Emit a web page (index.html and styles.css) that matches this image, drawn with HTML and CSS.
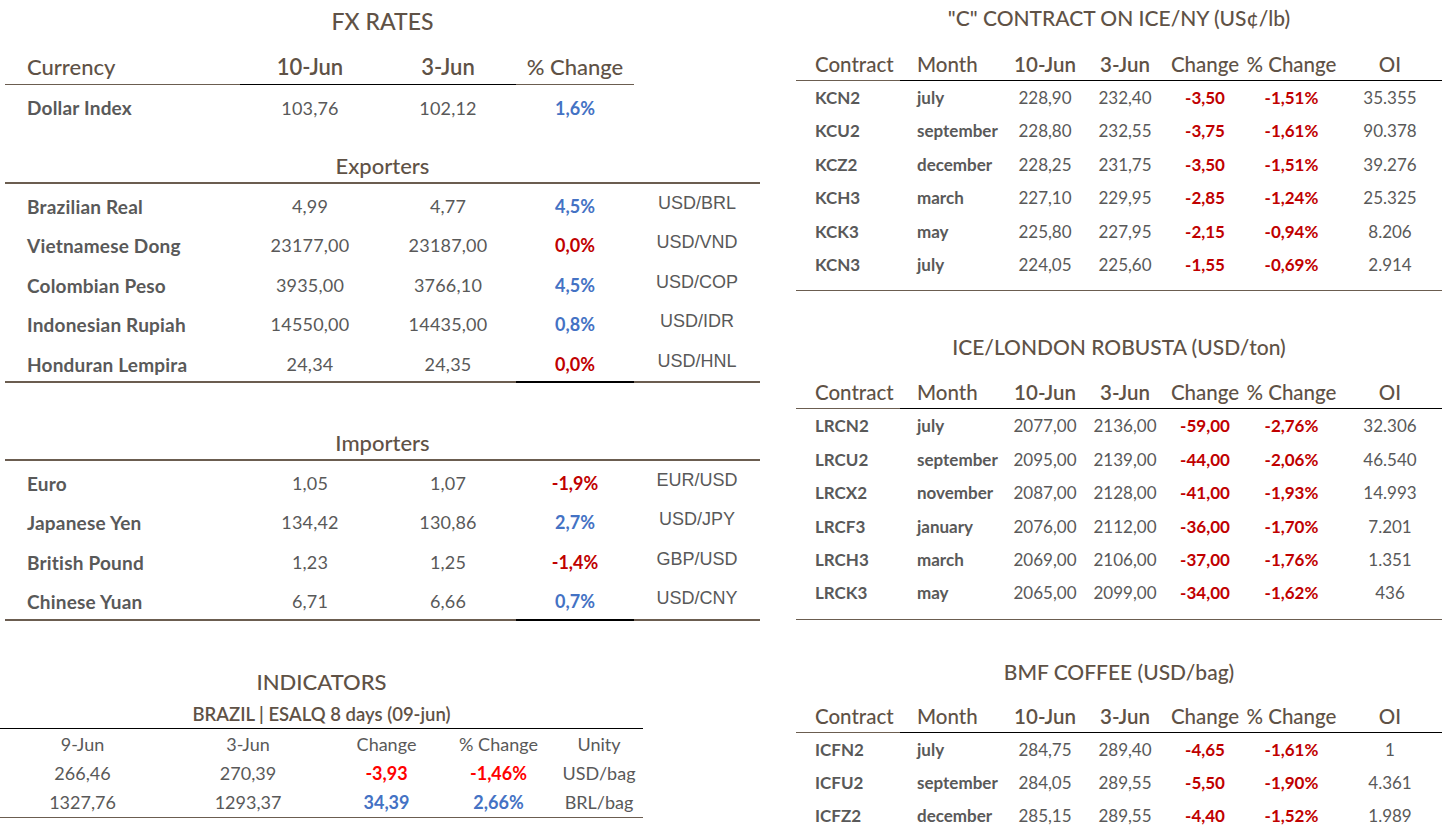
FILE: index.html
```html
<!DOCTYPE html>
<html lang="en">
<head>
<meta charset="utf-8">
<title>Market Report</title>
<link rel="stylesheet" href="styles.css">
</head>
<body>
<div class="page">
  <section class="left">
    <div class="fx">
      <h2 class="title fx-title">FX RATES</h2>
      <div class="fx-grid fx-head">
        <div class="cell name b-brown">Currency</div>
        <div class="cell num b-black date">10-Jun</div>
        <div class="cell num b-black date">3-Jun</div>
        <div class="cell num b-brown">% Change</div>
        <div class="cell"></div>
      </div>
      <div class="fx-grid fx-dollar">
        <div class="cell name">Dollar Index</div>
        <div class="cell num">103,76</div>
        <div class="cell num">102,12</div>
        <div class="cell num pct up">1,6%</div>
        <div class="cell"></div>
      </div>

      <h3 class="title sub-title exp-title">Exporters</h3>
      <div class="fx-grid fx-row">
        <div class="cell name">Brazilian Real</div>
        <div class="cell num">4,99</div>
        <div class="cell num">4,77</div>
        <div class="cell num pct up">4,5%</div>
        <div class="cell unit">USD/BRL</div>
      </div>
      <div class="fx-grid fx-row">
        <div class="cell name">Vietnamese Dong</div>
        <div class="cell num">23177,00</div>
        <div class="cell num">23187,00</div>
        <div class="cell num pct down">0,0%</div>
        <div class="cell unit">USD/VND</div>
      </div>
      <div class="fx-grid fx-row">
        <div class="cell name">Colombian Peso</div>
        <div class="cell num">3935,00</div>
        <div class="cell num">3766,10</div>
        <div class="cell num pct up">4,5%</div>
        <div class="cell unit">USD/COP</div>
      </div>
      <div class="fx-grid fx-row">
        <div class="cell name">Indonesian Rupiah</div>
        <div class="cell num">14550,00</div>
        <div class="cell num">14435,00</div>
        <div class="cell num pct up">0,8%</div>
        <div class="cell unit">USD/IDR</div>
      </div>
      <div class="fx-grid fx-row last">
        <div class="cell name">Honduran Lempira</div>
        <div class="cell num">24,34</div>
        <div class="cell num">24,35</div>
        <div class="cell num pct down b-black">0,0%</div>
        <div class="cell unit">USD/HNL</div>
      </div>

      <h3 class="title sub-title imp-title">Importers</h3>
      <div class="fx-grid fx-row">
        <div class="cell name">Euro</div>
        <div class="cell num">1,05</div>
        <div class="cell num">1,07</div>
        <div class="cell num pct down">-1,9%</div>
        <div class="cell unit">EUR/USD</div>
      </div>
      <div class="fx-grid fx-row">
        <div class="cell name">Japanese Yen</div>
        <div class="cell num">134,42</div>
        <div class="cell num">130,86</div>
        <div class="cell num pct up">2,7%</div>
        <div class="cell unit">USD/JPY</div>
      </div>
      <div class="fx-grid fx-row">
        <div class="cell name">British Pound</div>
        <div class="cell num">1,23</div>
        <div class="cell num">1,25</div>
        <div class="cell num pct down">-1,4%</div>
        <div class="cell unit">GBP/USD</div>
      </div>
      <div class="fx-grid fx-row last">
        <div class="cell name">Chinese Yuan</div>
        <div class="cell num">6,71</div>
        <div class="cell num">6,66</div>
        <div class="cell num pct up b-black">0,7%</div>
        <div class="cell unit">USD/CNY</div>
      </div>
    </div>

    <div class="ind">
      <h2 class="title ind-title">INDICATORS</h2>
      <div class="ind-sub">BRAZIL | ESALQ 8 days (09-jun)</div>
      <div class="ind-grid ind-head">
        <div>9-Jun</div>
        <div>3-Jun</div>
        <div>Change</div>
        <div>% Change</div>
        <div>Unity</div>
      </div>
      <div class="ind-grid ind-row">
        <div>266,46</div>
        <div>270,39</div>
        <div class="bold red">-3,93</div>
        <div class="bold red">-1,46%</div>
        <div>USD/bag</div>
      </div>
      <div class="ind-grid ind-row ind-last">
        <div>1327,76</div>
        <div>1293,37</div>
        <div class="bold blue">34,39</div>
        <div class="bold blue">2,66%</div>
        <div>BRL/bag</div>
      </div>
    </div>
  </section>

  <section class="right">
    <div class="mk mk-c">
      <h2 class="title mk-title">"C" CONTRACT ON ICE/NY (US¢/lb)</h2>
      <div class="mk-grid mk-head">
        <div class="c-code b-brown">Contract</div>
        <div class="c-month">Month</div>
        <div class="date">10-Jun</div>
        <div class="date">3-Jun</div>
        <div>Change</div>
        <div>% Change</div>
        <div>OI</div>
      </div>
      <div class="mk-body">
        <div class="mk-grid mk-row"><div class="c-code">KCN2</div><div class="c-month">july</div><div>228,90</div><div>232,40</div><div class="chg">-3,50</div><div class="chg">-1,51%</div><div class="oi">35.355</div></div>
        <div class="mk-grid mk-row"><div class="c-code">KCU2</div><div class="c-month">september</div><div>228,80</div><div>232,55</div><div class="chg">-3,75</div><div class="chg">-1,61%</div><div class="oi">90.378</div></div>
        <div class="mk-grid mk-row"><div class="c-code">KCZ2</div><div class="c-month">december</div><div>228,25</div><div>231,75</div><div class="chg">-3,50</div><div class="chg">-1,51%</div><div class="oi">39.276</div></div>
        <div class="mk-grid mk-row"><div class="c-code">KCH3</div><div class="c-month">march</div><div>227,10</div><div>229,95</div><div class="chg">-2,85</div><div class="chg">-1,24%</div><div class="oi">25.325</div></div>
        <div class="mk-grid mk-row"><div class="c-code">KCK3</div><div class="c-month">may</div><div>225,80</div><div>227,95</div><div class="chg">-2,15</div><div class="chg">-0,94%</div><div class="oi">8.206</div></div>
        <div class="mk-grid mk-row"><div class="c-code">KCN3</div><div class="c-month">july</div><div>224,05</div><div>225,60</div><div class="chg">-1,55</div><div class="chg">-0,69%</div><div class="oi">2.914</div></div>
      </div>
    </div>

    <div class="mk mk-london">
      <h2 class="title mk-title">ICE/LONDON ROBUSTA (USD/ton)</h2>
      <div class="mk-grid mk-head">
        <div class="c-code b-brown">Contract</div>
        <div class="c-month">Month</div>
        <div class="date">10-Jun</div>
        <div class="date">3-Jun</div>
        <div>Change</div>
        <div>% Change</div>
        <div>OI</div>
      </div>
      <div class="mk-body">
        <div class="mk-grid mk-row"><div class="c-code">LRCN2</div><div class="c-month">july</div><div>2077,00</div><div>2136,00</div><div class="chg">-59,00</div><div class="chg">-2,76%</div><div class="oi">32.306</div></div>
        <div class="mk-grid mk-row"><div class="c-code">LRCU2</div><div class="c-month">september</div><div>2095,00</div><div>2139,00</div><div class="chg">-44,00</div><div class="chg">-2,06%</div><div class="oi">46.540</div></div>
        <div class="mk-grid mk-row"><div class="c-code">LRCX2</div><div class="c-month">november</div><div>2087,00</div><div>2128,00</div><div class="chg">-41,00</div><div class="chg">-1,93%</div><div class="oi">14.993</div></div>
        <div class="mk-grid mk-row"><div class="c-code">LRCF3</div><div class="c-month">january</div><div>2076,00</div><div>2112,00</div><div class="chg">-36,00</div><div class="chg">-1,70%</div><div class="oi">7.201</div></div>
        <div class="mk-grid mk-row"><div class="c-code">LRCH3</div><div class="c-month">march</div><div>2069,00</div><div>2106,00</div><div class="chg">-37,00</div><div class="chg">-1,76%</div><div class="oi">1.351</div></div>
        <div class="mk-grid mk-row"><div class="c-code">LRCK3</div><div class="c-month">may</div><div>2065,00</div><div>2099,00</div><div class="chg">-34,00</div><div class="chg">-1,62%</div><div class="oi">436</div></div>
      </div>
    </div>

    <div class="mk mk-bmf">
      <h2 class="title mk-title">BMF COFFEE (USD/bag)</h2>
      <div class="mk-grid mk-head">
        <div class="c-code b-brown">Contract</div>
        <div class="c-month">Month</div>
        <div class="date">10-Jun</div>
        <div class="date">3-Jun</div>
        <div>Change</div>
        <div>% Change</div>
        <div>OI</div>
      </div>
      <div class="mk-body">
        <div class="mk-grid mk-row"><div class="c-code">ICFN2</div><div class="c-month">july</div><div>284,75</div><div>289,40</div><div class="chg">-4,65</div><div class="chg">-1,61%</div><div class="oi">1</div></div>
        <div class="mk-grid mk-row"><div class="c-code">ICFU2</div><div class="c-month">september</div><div>284,05</div><div>289,55</div><div class="chg">-5,50</div><div class="chg">-1,90%</div><div class="oi">4.361</div></div>
        <div class="mk-grid mk-row"><div class="c-code">ICFZ2</div><div class="c-month">december</div><div>285,15</div><div>289,55</div><div class="chg">-4,40</div><div class="chg">-1,52%</div><div class="oi">1.989</div></div>
      </div>
    </div>
  </section>
</div>
</body>
</html>
```

FILE: styles.css
```css
* { box-sizing: border-box; }

body {
  margin: 0;
  background: #ffffff;
  font-family: Lato, "Liberation Sans", sans-serif;
  color: #595959;
}

.page {
  display: grid;
  grid-template-columns: 760px 646px;
  column-gap: 36px;
  width: 1445px;
  height: 832px;
  overflow: hidden;
}

.title {
  margin: 0;
  font-weight: 500;
  color: #5f5246;
  text-align: center;
  font-size: 23px;
}

/* ---------- FX RATES ---------- */
.fx {
  margin-left: 5px;
  width: 755px;
}

.fx-title { line-height: 42px; }

.fx-grid {
  display: grid;
  grid-template-columns: 235px 140px 136px 118px 126px;
}

.cell { white-space: nowrap; }
.cell.name {
  padding-left: 22px;
  font-weight: 700;
  font-size: 19px;
  letter-spacing: 0.2px;
}
.cell.num { text-align: center; font-size: 18px; letter-spacing: 0.2px; }
.cell.pct { font-weight: 700; letter-spacing: 0; }
.cell.unit {
  text-align: center;
  font-family: "Liberation Sans", Arial, sans-serif;
  font-size: 18px;
}

.up, .blue { color: #4472c4; }
.down { color: #c00000; }
.red { color: #ff0000; }
.bold { font-weight: 700; }

.fx-head { margin-top: 8px; }
.fx-head .cell {
  line-height: 34px;
  font-size: 22px;
  font-weight: 500;
  letter-spacing: 0;
  color: #5f5246;
}
.fx-head .cell.date { font-weight: 600; }
.b-brown { border-bottom: 1px solid #6b5d50; }
.b-black { border-bottom: 1px solid #000000; }

.fx-dollar .cell { line-height: 46px; }

.sub-title {
  font-size: 22px;
  line-height: 32px;
  border-bottom: 2px solid #6b5d50;
}
.exp-title { margin-top: 19px; }
.imp-title { margin-top: 44px; }

.fx-row { height: 39.4px; }
.fx-row .cell { padding-top: 6px; line-height: 33.4px; }
.fx-row .cell.unit { padding-top: 0; line-height: 39.4px; }
.fx-row.last { height: auto; }
.fx-row.last .cell { border-bottom: 2px solid #6b5d50; height: 41.4px; }
.fx-row.last .cell.b-black { border-bottom-color: #000000; }

/* ---------- INDICATORS ---------- */
.ind {
  width: 643px;
  margin-top: 46px;
}
.ind-title { line-height: 30px; font-size: 22px; }
.ind-sub {
  text-align: center;
  color: #5f5246;
  font-weight: 600;
  font-size: 18.5px;
  padding-top: 4px;
  line-height: 27px;
  border-bottom: 1px solid #000000;
}
.ind-grid {
  display: grid;
  grid-template-columns: 165px 166px 111px 113px 88px;
  text-align: center;
  font-size: 18px;
}
.ind-head { line-height: 30px; }
.ind-row { line-height: 29px; }
.ind-last { border-bottom: 1px solid #6b5d50; }

/* ---------- RIGHT MARKETS ---------- */
.mk-title { line-height: 36px; font-size: 21px; }
.mk-london { margin-top: 38px; }
.mk-bmf { margin-top: 34px; }

.mk-grid {
  display: grid;
  grid-template-columns: 104px 105px 80px 80px 80px 93px 104px;
  text-align: center;
  white-space: nowrap;
}
.mk-grid .c-code { text-align: left; padding-left: 19px; }
.mk-grid .c-month { text-align: left; padding-left: 17px; }

.mk-head {
  margin-top: 12px;
  line-height: 32px;
  font-size: 20.5px;
  font-weight: 500;
  color: #5f5246;
  border-bottom: 1px solid #000000;
}
.mk-head .b-brown { border-bottom: 1px solid #6b5d50; margin-bottom: -1px; }
.mk-head .date { font-weight: 600; }
.mk-london .mk-head { margin-top: 11px; }
.mk-bmf .mk-head { margin-top: 10px; }

.mk-body {
  padding-bottom: 9px;
  border-bottom: 1px solid #6b5d50;
}
.mk-bmf .mk-body { padding-bottom: 0; border-bottom-color: #000000; }

.mk-row {
  height: 33.4px;
  line-height: 33.4px;
  font-size: 17px;
}
.mk-bmf .mk-row { height: 33px; line-height: 33px; }
.mk-row .c-code, .mk-row .c-month { font-weight: 700; }
.mk-row .chg { color: #c00000; font-weight: 700; }
```
